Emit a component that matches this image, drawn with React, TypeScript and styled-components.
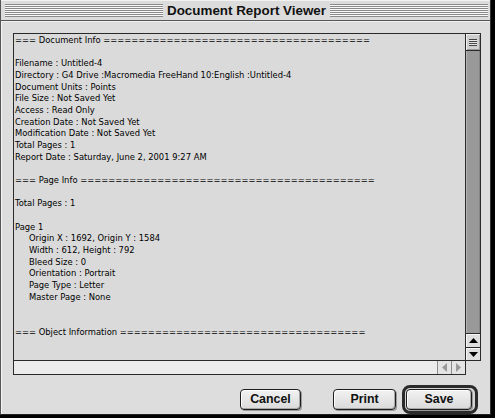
import React from "react";
import styled, { createGlobalStyle } from "styled-components";

const Global = createGlobalStyle`
  html, body { margin: 0; padding: 0; background: #000; }
  body { width: 495px; height: 418px; overflow: hidden; }
  #root { width: 495px; height: 418px; }
`;

const Window = styled.div`
  box-sizing: border-box;
  width: 491px;
  height: 415px;
  background: #dddddd;
  border-left: 1px solid #555;
  border-right: 1px solid #333;
  border-bottom: 1px solid #222;
  display: flex;
  flex-direction: column;
  box-shadow: inset 1px 0 0 #f4f4f4;
`;

const TitleBar = styled.div`
  box-sizing: border-box;
  height: 21px;
  flex: none;
  display: flex;
  align-items: center;
  gap: 4px;
  padding: 0 2px 0 4px;
  background: #dcdcdc;
  border-top: 1px solid #f2f2f2;
  border-bottom: 1px solid #555;
`;

const Stripes = styled.div`
  flex: 1;
  height: 13px;
  background: repeating-linear-gradient(
    to bottom,
    #8a8a8a 0 1px,
    #f8f8f8 1px 2px
  );
`;

const Title = styled.div`
  font-family: "Liberation Sans", Arial, sans-serif;
  font-weight: 700;
  font-size: 13.4px;
  color: #111;
  white-space: nowrap;
  line-height: 19px;
`;

const Body = styled.div`
  flex: 1;
  display: flex;
  flex-direction: column;
  padding: 12px 9px 0 12px;
  box-shadow: inset 0 1px 0 #f0f0f0;
`;

const ScrollGrid = styled.div`
  display: grid;
  grid-template-columns: 453px 15px;
  grid-template-rows: 328px 14px;
`;

const TextPane = styled.div`
  box-sizing: border-box;
  border: 1px solid #2a2a2a;
  background: #dadada;
  padding: 1px 0 0 1px;
  overflow: hidden;
  font-family: "DejaVu Sans", Verdana, sans-serif;
  font-size: 8.4px;
  line-height: 11.68px;
  color: #000;
  white-space: pre;
`;

const Line = styled.div<{ $indent?: boolean }>`
  height: 11.68px;
  padding-left: ${(p) => (p.$indent ? "14px" : "0")};
`;

const VScroll = styled.div`
  box-sizing: border-box;
  border-top: 1px solid #2a2a2a;
  border-bottom: 1px solid #2a2a2a;
  border-right: 1px solid #2a2a2a;
  display: flex;
  flex-direction: column;
`;

const Thumb = styled.div`
  box-sizing: border-box;
  height: 17px;
  flex: none;
  border-bottom: 1px solid #2a2a2a;
  background: #cfcfcf;
  box-shadow: inset 1px 1px 0 #eee, inset -1px -1px 0 #999;
  display: flex;
  align-items: center;
  justify-content: center;
`;

const Grip = styled.div`
  width: 8px;
  height: 7px;
  background: repeating-linear-gradient(
    to bottom,
    #444 0 1px,
    #e8e8e8 1px 2px
  );
`;

const Track = styled.div`
  flex: 1;
  background: #999;
  box-shadow: inset 1px 0 0 #b4b4b4, inset -1px 0 0 #858585;
`;

const ArrowBox = styled.div<{ $h: number }>`
  box-sizing: border-box;
  height: ${(p) => p.$h}px;
  flex: none;
  border-top: 1px solid #2a2a2a;
  background: #dedede;
  box-shadow: inset 1px 1px 0 #f6f6f6;
  display: flex;
  align-items: center;
  justify-content: center;
`;

const HScroll = styled.div`
  box-sizing: border-box;
  border-left: 1px solid #2a2a2a;
  border-right: 1px solid #2a2a2a;
  border-bottom: 1px solid #2a2a2a;
  display: flex;
`;

const HTrack = styled.div`
  flex: 1;
  background: #ececec;
`;

const HArrow = styled.div`
  box-sizing: border-box;
  width: 14px;
  flex: none;
  border-left: 1px solid #8c8c8c;
  background: #e4e4e4;
  display: flex;
  align-items: center;
  justify-content: center;
`;

const ButtonRow = styled.div`
  display: flex;
  align-items: center;
  justify-content: flex-end;
  padding-top: 10px;
  padding-right: 3px;
`;

const Button = styled.button<{ $w: number; $mr?: number }>`
  box-sizing: border-box;
  width: ${(p) => p.$w}px;
  height: 21px;
  margin-right: ${(p) => p.$mr ?? 0}px;
  padding: 0;
  border: 1px solid #1e1e1e;
  border-radius: 4px;
  background: linear-gradient(#f2f2f2, #dadada);
  box-shadow: inset 1px 1px 0 #fff, inset -1px -1px 0 #a8a8a8, 1px 1px 0 #9a9a9a;
  font-family: "Liberation Sans", Arial, sans-serif;
  font-weight: 700;
  font-size: 12.4px;
  color: #111;
  line-height: 19px;
`;

const DefaultRing = styled.div`
  box-sizing: border-box;
  width: 76px;
  padding: 1px;
  border: 3px solid #2a2a2a;
  border-radius: 8px;
  background: #d4d4d4;
  display: flex;
`;

const Up = () => (
  <svg width="9" height="5" viewBox="0 0 9 5">
    <polygon points="4.5,0 9,5 0,5" fill="#000" />
  </svg>
);
const Down = () => (
  <svg width="9" height="5" viewBox="0 0 9 5">
    <polygon points="0,0 9,0 4.5,5" fill="#000" />
  </svg>
);
const Left = () => (
  <svg width="5" height="9" viewBox="0 0 5 9">
    <polygon points="5,0 5,9 0,4.5" fill="#9a9a9a" />
  </svg>
);
const Right = () => (
  <svg width="5" height="9" viewBox="0 0 5 9">
    <polygon points="0,0 5,4.5 0,9" fill="#9a9a9a" />
  </svg>
);

const eq = (n: number) => "=".repeat(n);

const lines: { t: string; indent?: boolean }[] = [
  { t: "=== Document Info " + eq(38) },
  { t: "" },
  { t: "Filename : Untitled-4" },
  { t: "Directory : G4 Drive :Macromedia FreeHand 10:English :Untitled-4" },
  { t: "Document Units : Points" },
  { t: "File Size : Not Saved Yet" },
  { t: "Access : Read Only" },
  { t: "Creation Date : Not Saved Yet" },
  { t: "Modification Date : Not Saved Yet" },
  { t: "Total Pages : 1" },
  { t: "Report Date : Saturday, June 2, 2001 9:27 AM" },
  { t: "" },
  { t: "=== Page Info " + eq(42) },
  { t: "" },
  { t: "Total Pages : 1" },
  { t: "" },
  { t: "Page 1" },
  { t: "Origin X : 1692, Origin Y : 1584", indent: true },
  { t: "Width : 612, Height : 792", indent: true },
  { t: "Bleed Size : 0", indent: true },
  { t: "Orientation : Portrait", indent: true },
  { t: "Page Type : Letter", indent: true },
  { t: "Master Page : None", indent: true },
  { t: "" },
  { t: "" },
  { t: "=== Object Information " + eq(35) },
];

export default function App() {
  return (
    <>
      <Global />
      <Window>
        <TitleBar>
          <Stripes />
          <Title>Document Report Viewer</Title>
          <Stripes />
        </TitleBar>
        <Body>
          <ScrollGrid>
            <TextPane>
              {lines.map((l, i) => (
                <Line key={i} $indent={l.indent}>
                  {l.t}
                </Line>
              ))}
            </TextPane>
            <VScroll>
              <Thumb>
                <Grip />
              </Thumb>
              <Track />
              <ArrowBox $h={14}>
                <Up />
              </ArrowBox>
              <ArrowBox $h={13}>
                <Down />
              </ArrowBox>
            </VScroll>
            <HScroll>
              <HTrack />
              <HArrow>
                <Left />
              </HArrow>
              <HArrow>
                <Right />
              </HArrow>
            </HScroll>
          </ScrollGrid>
          <ButtonRow>
            <Button $w={61} $mr={32}>Cancel</Button>
            <Button $w={63} $mr={6}>Print</Button>
            <DefaultRing>
              <Button $w={66}>Save</Button>
            </DefaultRing>
          </ButtonRow>
        </Body>
      </Window>
    </>
  );
}
